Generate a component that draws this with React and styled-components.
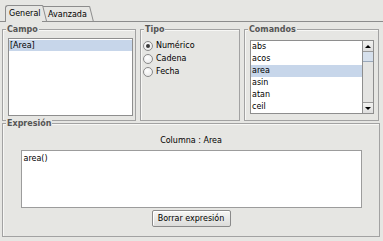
import React from 'react';
import styled, { createGlobalStyle } from 'styled-components';

const BG = '#e6e6e3';

const Global = createGlobalStyle`
  html, body { margin: 0; padding: 0; background: ${BG}; }
  body { font-family: "DejaVu Sans", "Liberation Sans", sans-serif; font-size: 8px; color: #000; }
  * { box-sizing: border-box; }
`;

const Window = styled.div`
  width: 383px;
  height: 241px;
  background: ${BG};
  padding-top: 5px;
  display: flex;
  flex-direction: column;
  overflow: hidden;
`;

const TabBar = styled.div`
  display: flex;
  align-items: flex-end;
  height: 16px;
  padding-left: 5px;
  position: relative;
  z-index: 2;
`;

const Tab = styled.div`
  position: relative;
  height: ${p => (p.$active ? 17 : 15)}px;
  margin-bottom: ${p => (p.$active ? -1 : 0)}px;
  width: ${p => p.$w}px;
  margin-left: ${p => p.$ml || 0}px;
  padding: 2px 0 0 ${p => p.$pl}px;
  border-top: 1px solid #8c8c8c;
  border-left: ${p => (p.$active ? '1px solid #8c8c8c' : 'none')};
  border-top-left-radius: ${p => (p.$active ? 3 : 0)}px;
  background: ${BG};
  z-index: ${p => (p.$active ? 2 : 1)};
  line-height: 11px;
  white-space: nowrap;
  &::after {
    content: '';
    position: absolute;
    top: -1px;
    left: 100%;
    width: 0;
    height: 16px;
    border-right: 1px solid #8c8c8c;
    transform: skewX(14deg);
    transform-origin: top left;
  }
`;

const Panel = styled.div`
  flex: 1;
  border-top: 1px solid #8c8c8c;
  padding: 7px 0 0 2px;
  display: flex;
  flex-direction: column;
  gap: 6px;
`;

const TopRow = styled.div`
  display: grid;
  grid-template-columns: 134px 100px 135px;
  column-gap: 4px;
  height: 88px;
`;

const Group = styled.div`
  position: relative;
  border: 1px solid #a2a2a2;
  box-shadow: inset 1px 1px 0 #f7f7f5;
  display: flex;
  flex-direction: column;
  padding: ${p => p.$pad};
  width: ${p => p.$w || 'auto'};
  height: ${p => p.$h || 'auto'};
  align-items: ${p => p.$align || 'stretch'};
`;

const Legend = styled.span`
  position: absolute;
  top: -5px;
  left: 3px;
  padding: 0 1px;
  background: ${BG};
  font-weight: bold;
  color: #555;
  line-height: 9px;
`;

const ListBox = styled.div`
  flex: 1;
  position: relative;
  background: #fff;
  border: 1px solid #8e8e8e;
  padding: ${p => p.$pad || '1px 0 0 0'};
  overflow: hidden;
`;

const ListItem = styled.div`
  height: ${p => p.$h}px;
  line-height: ${p => p.$h}px;
  padding-left: 1px;
  margin-right: ${p => p.$mr || 0}px;
  background: ${p => (p.$sel ? '#c7d6ea' : 'transparent')};
  white-space: nowrap;
`;

const RadioRow = styled.label`
  display: flex;
  align-items: center;
  gap: 3px;
  height: 13px;
`;

const RadioCircle = styled.span`
  width: 10px;
  height: 10px;
  border-radius: 50%;
  border: 1px solid #8a8a8a;
  background: radial-gradient(circle at 40% 35%, #ffffff 0%, #ececec 70%, #d8d8d8 100%);
  display: flex;
  align-items: center;
  justify-content: center;
  &::after {
    content: '';
    width: 4px;
    height: 4px;
    border-radius: 50%;
    background: ${p => (p.$on ? '#3a3a3a' : 'transparent')};
  }
`;

const RadioList = styled.div`
  display: flex;
  flex-direction: column;
`;

const ScrollBar = styled.div`
  position: absolute;
  top: 0;
  right: 0;
  bottom: 0;
  width: 11px;
  border-left: 1px solid #8e8e8e;
  background: #e4e4e2;
  display: flex;
  flex-direction: column;
`;

const ScrollBtn = styled.div`
  height: 11px;
  background: linear-gradient(#f2f2f0, #dedede);
  border-bottom: ${p => (p.$down ? 'none' : '1px solid #9a9a9a')};
  border-top: ${p => (p.$down ? '1px solid #9a9a9a' : 'none')};
  display: flex;
  align-items: center;
  justify-content: center;
  &::after {
    content: '';
    width: 0;
    height: 0;
    border-left: 3px solid transparent;
    border-right: 3px solid transparent;
    ${p => (p.$down ? 'border-top: 3px solid #000;' : 'border-bottom: 3px solid #000;')}
  }
`;

const Thumb = styled.div`
  height: 10px;
  margin-top: 0;
  border-bottom: 1px solid #9aa8ba;
  background-color: #d6e0ec;
  background-image: radial-gradient(#8fa3bd 0.6px, transparent 0.7px);
  background-size: 2px 2px;
`;

const Spacer = styled.div`
  flex: 1;
`;

const ColumnLabel = styled.div`
  margin-top: 12px;
  line-height: 10px;
  height: 10px;
  text-align: center;
`;

const TextArea = styled.div`
  margin-top: 4px;
  width: 341px;
  height: 58px;
  background: #fff;
  border: 1px solid #9c9c9c;
  padding: 3px 2px;
  line-height: 10px;
`;

const Button = styled.button`
  margin-top: 2px;
  width: 79px;
  height: 17px;
  padding: 0;
  font: inherit;
  color: #000;
  border: 1px solid #8a8a8a;
  border-radius: 2px;
  background: linear-gradient(#f6f6f5, #dcdcda);
  box-shadow: inset 1px 1px 0 #fff;
`;

const comandos = ['abs', 'acos', 'area', 'asin', 'atan', 'ceil'];

export default function App() {
  return (
    <>
      <Global />
      <Window>
        <TabBar>
          <Tab $active $w={37} $pl={3}>General</Tab>
          <Tab $w={46} $ml={1} $pl={5}>Avanzada</Tab>
        </TabBar>
        <Panel>
          <TopRow>
            <Group $pad="8px 2px 4px 5px">
              <Legend>Campo</Legend>
              <ListBox>
                <ListItem $h={11} $sel>[Area]</ListItem>
              </ListBox>
            </Group>
            <Group $pad="9px 2px 0 2px">
              <Legend>Tipo</Legend>
              <RadioList>
                <RadioRow><RadioCircle $on />Numérico</RadioRow>
                <RadioRow><RadioCircle />Cadena</RadioRow>
                <RadioRow><RadioCircle />Fecha</RadioRow>
              </RadioList>
            </Group>
            <Group $pad="10px 4px 6px 5px">
              <Legend>Comandos</Legend>
              <ListBox $pad="0">
                {comandos.map(c => (
                  <ListItem key={c} $h={12} $mr={11} $sel={c === 'area'}>{c}</ListItem>
                ))}
                <ScrollBar>
                  <ScrollBtn />
                  <Thumb />
                  <Spacer />
                  <ScrollBtn $down />
                </ScrollBar>
              </ListBox>
            </Group>
          </TopRow>
          <Group $w="378px" $h="114px" $pad="0" $align="center">
            <Legend>Expresión</Legend>
            <ColumnLabel>Columna : Area</ColumnLabel>
            <TextArea>area()</TextArea>
            <Button>Borrar expresión</Button>
          </Group>
        </Panel>
      </Window>
    </>
  );
}
